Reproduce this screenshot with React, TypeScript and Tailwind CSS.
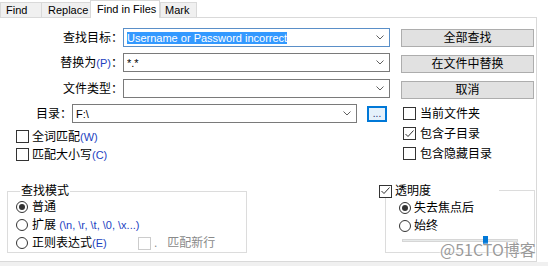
import React from 'react';

const ACCEL = 'text-[11px] text-[#1d3fbf]';

const Chevron = () => (
  <svg width="8" height="5" viewBox="0 0 8 5" className="shrink-0">
    <path d="M0.5 0.5 L4 4 L7.5 0.5" fill="none" stroke="#606060" strokeWidth="1" />
  </svg>
);

const Combo = ({
  value,
  selected,
  focused,
  width,
}: {
  value?: string;
  selected?: boolean;
  focused?: boolean;
  width: string;
}) => (
  <div
    className={`flex h-[19px] items-center border bg-white pl-[3px] pr-[5px] ${width} ${
      focused ? 'border-[#5a8fc8]' : 'border-[#7a7a7a]'
    }`}
  >
    <div className="flex-1 overflow-hidden whitespace-nowrap text-[11px] leading-[14px]">
      {selected ? <span className="bg-[#3399ff] text-white">{value}</span> : value}
    </div>
    <Chevron />
  </div>
);

const Check = ({ checked, disabled }: { checked?: boolean; disabled?: boolean }) => (
  <span
    className={`flex h-[13px] w-[13px] shrink-0 items-center justify-center border bg-white ${
      disabled ? 'border-[#cccccc]' : 'border-[#333333]'
    }`}
  >
    {checked && (
      <svg width="9" height="8" viewBox="0 0 9 8">
        <path d="M0.5 4 L3 6.5 L8.5 0.5" fill="none" stroke="#333333" strokeWidth="1" />
      </svg>
    )}
  </span>
);

const Radio = ({ checked }: { checked?: boolean }) => (
  <span className="flex h-[12px] w-[12px] shrink-0 items-center justify-center rounded-full border border-[#333333] bg-white">
    {checked && <span className="h-[6px] w-[6px] rounded-full bg-[#333333]" />}
  </span>
);

const Button = ({ children, top }: { children: React.ReactNode; top: string }) => (
  <div
    className={`flex h-[18px] w-[133px] items-center justify-center border border-[#adadad] bg-[#e1e1e1] ${top}`}
  >
    {children}
  </div>
);

const Tab = ({ label, width, pad, active }: { label: string; width: string; pad: string; active?: boolean }) =>
  active ? (
    <div
      className={`relative z-10 -mb-px flex h-[18px] items-start border-x border-t border-[#d9d9d9] bg-white pt-[1px] text-[11px] ${width} ${pad}`}
    >
      {label}
    </div>
  ) : (
    <div
      className={`flex h-[15px] items-center border-l border-t border-[#d9d9d9] bg-[#f0f0f0] text-[11px] ${width} ${pad}`}
    >
      {label}
    </div>
  );

export default function App() {
  return (
    <div className="relative h-[266px] w-[548px] overflow-hidden bg-white font-['Liberation_Sans','Noto_Sans_CJK_SC',sans-serif] text-[12px] leading-[14px] text-black">
      {/* tabs */}
      <div className="flex h-[17px] items-end">
        <Tab label="Find" width="w-[41px]" pad="pl-[5px]" />
        <Tab label="Replace" width="w-[49px]" pad="pl-[6px]" />
        <Tab label="Find in Files" width="w-[70px]" pad="pl-[6px]" active />
        <div className="flex h-[15px] w-[37px] items-center border-x border-t border-[#d9d9d9] bg-[#f0f0f0] pl-[4px] text-[11px]">
          Mark
        </div>
      </div>

      {/* panel */}
      <div className="flex h-[245px] w-[537px] flex-col border-y border-r border-[#d9d9d9] bg-white">
        <div className="flex">
          {/* left column */}
          <div className="flex w-[390px] flex-col">
            <div className="mt-[10px] flex h-[19px] items-center">
              <div className="w-[123px] text-right">查找目标：</div>
              <Combo width="w-[267px]" value="Username or Password incorrect" selected focused />
            </div>
            <div className="mt-[6px] flex h-[19px] items-center">
              <div className="w-[123px] text-right">
                替换为<span className={ACCEL}>(P)</span>：
              </div>
              <Combo width="w-[267px]" value="*.*" />
            </div>
            <div className="mt-[7px] flex h-[19px] items-center">
              <div className="w-[123px] text-right">文件类型：</div>
              <Combo width="w-[267px]" />
            </div>
            <div className="mt-[6px] flex h-[19px] items-center">
              <div className="w-[72px] text-right">目录：</div>
              <Combo width="w-[285px]" value="F:\" />
              <div className="ml-[10px] flex h-[16px] w-[20px] items-center justify-center border border-[#0078d7] bg-[#e5f1fb] text-[10px] leading-[10px] text-[#1a2f6e] [box-shadow:inset_0_0_0_1px_#0078d7]">
                ...
              </div>
            </div>
            <div className="mt-[7px] flex h-[13px] items-center gap-[3px] pl-[16px]">
              <Check />
              <span>
                全词匹配<span className={ACCEL}>(W)</span>
              </span>
            </div>
            <div className="mt-[5px] flex h-[13px] items-center gap-[3px] pl-[16px]">
              <Check />
              <span>
                匹配大小写<span className={ACCEL}>(C)</span>
              </span>
            </div>
          </div>

          {/* right column */}
          <div className="ml-[11px] flex w-[134px] flex-col">
            <Button top="mt-[11px]">全部查找</Button>
            <Button top="mt-[8px]">在文件中替换</Button>
            <Button top="mt-[8px]">取消</Button>
            <div className="mt-[8px] flex h-[13px] items-center gap-[4px] pl-[2px]">
              <Check />
              <span>当前文件夹</span>
            </div>
            <div className="mt-[7px] flex h-[13px] items-center gap-[4px] pl-[2px]">
              <Check checked />
              <span>包含子目录</span>
            </div>
            <div className="mt-[7px] flex h-[13px] items-center gap-[4px] pl-[2px]">
              <Check />
              <span>包含隐藏目录</span>
            </div>
          </div>
        </div>

        {/* bottom groups */}
        <div className="mt-[23px] flex items-start">
          <fieldset className="ml-[7px] w-[240px] border border-[#dcdcdc] pl-[8px]">
            <legend className="ml-[4px] px-[1px] leading-[14px]">查找模式</legend>
            <div className="flex h-[18px] items-center gap-[4px]">
              <Radio checked />
              <span>普通</span>
            </div>
            <div className="flex h-[18px] items-center gap-[4px]">
              <Radio />
              <span>
                扩展 <span className={ACCEL}>(\n, \r, \t, \0, \x...)</span>
              </span>
            </div>
            <div className="flex h-[18px] items-center">
              <div className="flex w-[122px] items-center gap-[4px]">
                <Radio />
                <span>
                  正则表达式<span className={ACCEL}>(E)</span>
                </span>
              </div>
              <Check disabled />
              <span className="ml-[3px] text-[#8a8a8a]">.</span>
              <span className="ml-[10px] text-[#8a8a8a]">匹配新行</span>
            </div>
          </fieldset>

          <div className="relative ml-[132px] w-[156px] pt-[6px]">
            <div className="absolute left-0 top-0 z-10 flex h-[14px] w-[120px] items-center gap-[3px] bg-white">
              <Check checked />
              <span>透明度</span>
            </div>
            <div className="ml-[6px] h-[63px] w-[150px] border border-[#dcdcdc] pl-[13px] pt-[8px]">
              <div className="flex h-[18px] items-center gap-[3px]">
                <Radio checked />
                <span>失去焦点后</span>
              </div>
              <div className="flex h-[18px] items-center gap-[3px]">
                <Radio />
                <span>始终</span>
              </div>
              <div className="relative ml-[3px] mt-[4px] h-[3px] w-[116px] border border-[#d6d6d6] bg-[#e7eaea]">
                <div className="absolute left-[80px] top-[-4px] h-[8px] w-[5px] bg-[#0078d7]" />
              </div>
            </div>
          </div>
        </div>
      </div>
      <div className="h-[4px] bg-[#f0f0f0]" />

      {/* watermark */}
      <div className="absolute left-[440px] top-[239px] font-['Noto_Sans_CJK_SC',sans-serif] text-[16px] leading-[20px] text-[#9a9a9a] [text-shadow:0_0_2px_#ffffff,0_0_2px_#ffffff]">
        @51CTO博客
      </div>
    </div>
  );
}
